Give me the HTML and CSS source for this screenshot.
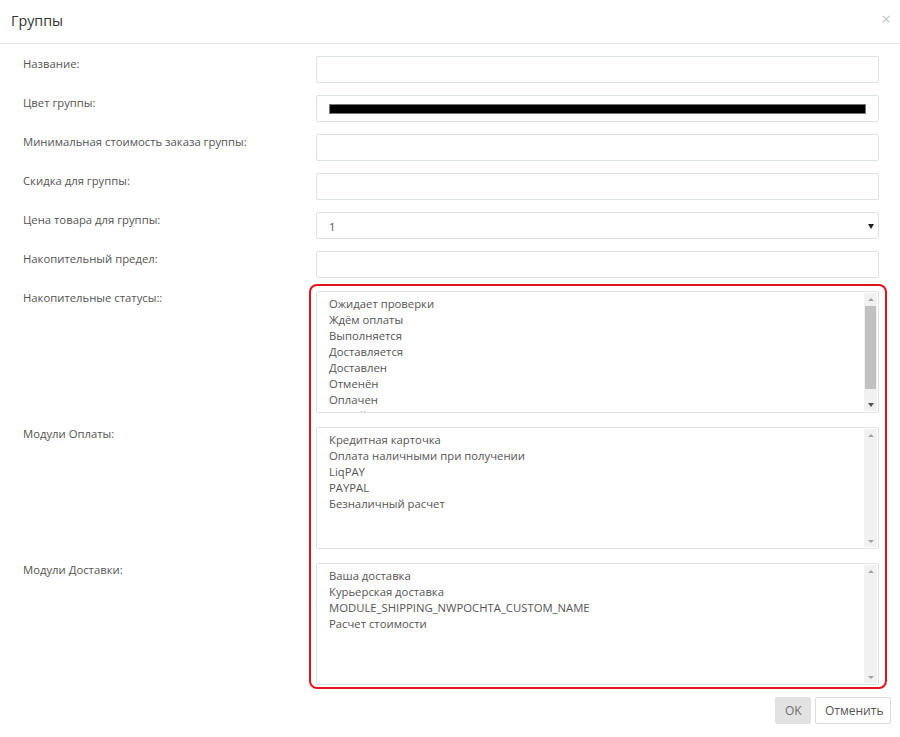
FILE: index.html
```html
<!DOCTYPE html>
<html lang="ru">
<head>
<meta charset="utf-8">
<title>Группы</title>
<link rel="stylesheet" href="styles.css">
</head>
<body>
<div class="modal">
  <div class="modal-header">
    <h4 class="modal-title">Группы</h4>
    <span class="close">×</span>
  </div>
  <div class="modal-body">
    <div class="row">
      <label class="lbl">Название:</label>
      <div class="input"></div>
    </div>
    <div class="row">
      <label class="lbl">Цвет группы:</label>
      <div class="input color"><span class="swatch"></span></div>
    </div>
    <div class="row">
      <label class="lbl">Минимальная стоимость заказа группы:</label>
      <div class="input"></div>
    </div>
    <div class="row">
      <label class="lbl">Скидка для группы:</label>
      <div class="input"></div>
    </div>
    <div class="row">
      <label class="lbl">Цена товара для группы:</label>
      <div class="input select"><span class="val">1</span><span class="caret"></span></div>
    </div>
    <div class="row">
      <label class="lbl">Накопительный предел:</label>
      <div class="input"></div>
    </div>
    <div class="row list-row">
      <label class="lbl">Накопительные статусы::</label>
      <div class="listbox">
        <div class="options">
          <div>Ожидает проверки</div>
          <div>Ждём оплаты</div>
          <div>Выполняется</div>
          <div>Доставляется</div>
          <div>Доставлен</div>
          <div>Отменён</div>
          <div>Оплачен</div>
          <div>Новый</div>
        </div>
        <div class="sbar">
          <span class="arr up"></span>
          <span class="track"><span class="thumb"></span></span>
          <span class="arr down dark"></span>
        </div>
      </div>
    </div>
    <div class="row list-row">
      <label class="lbl">Модули Оплаты:</label>
      <div class="listbox">
        <div class="options">
          <div>Кредитная карточка</div>
          <div>Оплата наличными при получении</div>
          <div>LiqPAY</div>
          <div>PAYPAL</div>
          <div>Безналичный расчет</div>
        </div>
        <div class="sbar">
          <span class="arr up"></span>
          <span class="track"></span>
          <span class="arr down"></span>
        </div>
      </div>
    </div>
    <div class="row list-row">
      <label class="lbl">Модули Доставки:</label>
      <div class="listbox">
        <div class="options">
          <div>Ваша доставка</div>
          <div>Курьерская доставка</div>
          <div>MODULE_SHIPPING_NWPOCHTA_CUSTOM_NAME</div>
          <div>Расчет стоимости</div>
        </div>
        <div class="sbar">
          <span class="arr up"></span>
          <span class="track"></span>
          <span class="arr down"></span>
        </div>
      </div>
    </div>
    <div class="highlight"></div>
  </div>
  <div class="modal-footer">
    <button class="btn btn-ok">OK</button>
    <button class="btn btn-cancel">Отменить</button>
  </div>
</div>
</body>
</html>
```

FILE: styles.css
```css
* { box-sizing: border-box; }
html, body { margin: 0; padding: 0; background: #fff; }
body {
  font-family: "Open Sans", "DejaVu Sans", sans-serif;
  font-size: 11.3px;
  color: #555;
  width: 900px;
  height: 737px;
  overflow: hidden;
}
.modal { width: 900px; }
.modal-header {
  height: 44px;
  border-bottom: 1px solid #e5e5e5;
  display: flex;
  align-items: center;
  justify-content: space-between;
  padding: 0 9px 3px 11px;
}
.modal-title {
  margin: 0;
  font-weight: 400;
  font-size: 14.3px;
  color: #333;
}
.close {
  font-size: 17px;
  color: #c6c6c6;
  line-height: 1;
  margin-top: -4px;
}
.modal-body {
  position: relative;
  display: flow-root;
  padding: 0 21px 0 23px;
}
.row {
  display: grid;
  grid-template-columns: 293px 563px;
  margin-top: 12px;
}
.row.list-row { margin-top: 13px; }
.row.list-row + .row.list-row { margin-top: 14px; }
.lbl {
  line-height: 16px;
  color: #555;
}
.list-row .lbl { margin-top: -1px; }
.input {
  height: 27px;
  border: 1px solid #dbe3e3;
  border-radius: 2px;
  background: #fff;
}
.input.color {
  display: flex;
  align-items: center;
  padding: 0 12px;
}
.swatch {
  display: block;
  width: 538px;
  height: 10px;
  background: #000;
  border: 1px solid #777;
  margin-top: 1px;
}
.input.select {
  display: flex;
  align-items: center;
  justify-content: space-between;
  padding: 0 4px 0 12px;
  color: #555;
}
.input.select .val { margin-top: 1px; }
.caret {
  width: 0;
  height: 0;
  border-left: 3px solid transparent;
  border-right: 3px solid transparent;
  border-top: 5px solid #222;
  margin-top: 1px;
}
.listbox {
  height: 122px;
  border: 1px solid #dbe3e3;
  border-radius: 2px;
  display: flex;
  overflow: hidden;
  background: #fff;
}
.options {
  flex: 1;
  padding: 4px 12px 0 12px;
  line-height: 16px;
  overflow: hidden;
  color: #555;
}
.sbar {
  width: 13px;
  margin: 1px 1px 1px 0;
  display: flex;
  flex-direction: column;
  background: #f1f1f1;
}
.arr {
  height: 12px;
  display: flex;
  align-items: center;
  justify-content: center;
}
.arr::before {
  content: "";
  width: 0;
  height: 0;
  border-left: 3px solid transparent;
  border-right: 3px solid transparent;
}
.arr.up::before { border-bottom: 3px solid #a3a3a3; }
.arr.down::before { border-top: 3px solid #a3a3a3; }
.arr.down.dark::before { border-top: 4px solid #505050; }
.track { flex: 1; display: flex; flex-direction: column; }
.thumb {
  display: block;
  height: 83px;
  margin: 1px 1px 0 1px;
  background: #c1c1c1;
}
.highlight {
  position: absolute;
  left: 309px;
  top: 240px;
  width: 578px;
  height: 405px;
  border: 2px solid #e0141c;
  border-radius: 8px;
  pointer-events: none;
}
.modal-footer {
  display: flex;
  justify-content: flex-end;
  gap: 4px;
  padding: 12px 9px 0 0;
}
.btn {
  font-family: "Open Sans", "DejaVu Sans", sans-serif;
  font-size: 12px;
  height: 27px;
  padding: 0 9px;
  border-radius: 2px;
  cursor: pointer;
}
.btn-ok {
  background: #e2e2e2;
  border: 1px solid #e2e2e2;
  color: #6f6f6f;
  width: 36px;
}
.btn-cancel {
  background: #fff;
  border: 1px solid #dcdcdc;
  color: #555;
  width: 76px;
}
```
